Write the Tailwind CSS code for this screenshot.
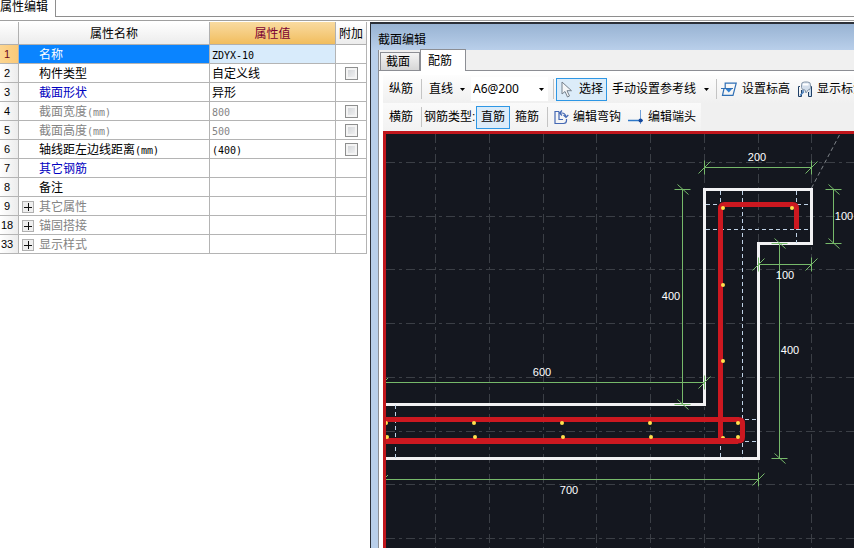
<!DOCTYPE html>
<html lang="zh-CN">
<head>
<meta charset="utf-8">
<title>属性编辑</title>
<script src="https://cdn.jsdelivr.net/npm/@tailwindcss/browser@4"></script>
</head>
<body class="flex h-screen flex-col overflow-hidden bg-white font-['Liberation_Sans','Noto_Sans_CJK_SC',sans-serif] text-xs leading-4 text-black">
  <header class="flex h-[21px] shrink-0 border-b border-[#a0a0a0]">
    <h1 class="w-[55px] shrink-0 -mt-px whitespace-nowrap leading-4">属性编辑</h1>
    <div class="h-[17px] flex-1 border-b border-l border-[#8e8e8e]"></div>
  </header>

  <div class="flex min-h-0 flex-1 pt-px">
    <section class="w-[370px] shrink-0" aria-label="属性">
      <table class="w-[367px] table-fixed border-separate border-spacing-0">
        <colgroup><col class="w-[19px]"><col class="w-[191px]"><col class="w-[126px]"><col class="w-[31px]"></colgroup>
        <thead>
          <tr class="h-[23px] [&>th]:border-r [&>th]:border-b [&>th]:border-[#b0b0b0] [&>th]:p-0 [&>th]:pt-0.5 [&>th]:font-normal">
            <th class="bg-linear-to-b from-white to-[#ececec]"></th>
            <th class="bg-linear-to-b from-white to-[#ececec]">属性名称</th>
            <th class="bg-linear-to-b from-[#f9dba0] to-[#f1bd5c] text-[#7a0032]">属性值</th>
            <th class="bg-linear-to-b from-white to-[#ececec] whitespace-nowrap">附加</th>
          </tr>
        </thead>
        <tbody class="[&>tr]:h-[19px] [&_td]:border-r [&_td]:border-b [&_td]:border-[#b4b4b4] [&_td]:p-0 [&_td>div]:h-4 [&_td]:pt-px [&_th]:border-r [&_th]:border-b [&_th]:border-[#b4b4b4] [&_th]:bg-linear-to-r [&_th]:p-0 [&_th]:pr-1 [&_th]:text-[11px] [&_th]:font-normal [&_input]:mx-auto [&_input]:block [&_input]:size-[13px] [&_input]:appearance-none [&_input]:border [&_input]:border-[#8e8f8f] [&_input]:bg-linear-to-br [&_input]:from-[#cdd0d4] [&_input]:to-[#f6f6f6] [&_input]:shadow-[inset_0_0_0_2px_#f4f4f4] [&_code]:font-['DejaVu_Sans_Mono',monospace] [&_code]:text-[10px] [&_code]:leading-none [&_button]:mr-[5px] [&_button]:ml-[3px] [&_button]:size-3 [&_button]:border [&_button]:border-[#b0b0b0] [&_button]:bg-[#efefef] [&_button>svg]:block">
          <tr><th class="from-[#fcd590] to-[#fbca78] text-[#6b0a20]">1</th><td class="bg-[#0a84ff] text-white"><div class="pl-5">名称</div></td><td class="bg-[#d8ebfb]"><div class="pl-0.5"><code>ZDYX-10</code></div></td><td></td></tr>
          <tr><th class="from-white to-[#ececec]">2</th><td><div class="pl-5">构件类型</div></td><td><div class="pl-0.5">自定义线</div></td><td><input type="checkbox" aria-label="附加 构件类型"></td></tr>
          <tr><th class="from-white to-[#ececec]">3</th><td class="text-[#0000c0]"><div class="pl-5">截面形状</div></td><td><div class="pl-0.5">异形</div></td><td></td></tr>
          <tr><th class="from-white to-[#ececec]">4</th><td class="text-[#848484]"><div class="pl-5">截面宽度<code>(mm)</code></div></td><td class="text-[#848484]"><div class="pl-0.5"><code>800</code></div></td><td><input type="checkbox" aria-label="附加 截面宽度"></td></tr>
          <tr><th class="from-white to-[#ececec]">5</th><td class="text-[#848484]"><div class="pl-5">截面高度<code>(mm)</code></div></td><td class="text-[#848484]"><div class="pl-0.5"><code>500</code></div></td><td><input type="checkbox" aria-label="附加 截面高度"></td></tr>
          <tr><th class="from-white to-[#ececec]">6</th><td><div class="pl-5">轴线距左边线距离<code>(mm)</code></div></td><td><div class="pl-0.5"><code>(400)</code></div></td><td><input type="checkbox" aria-label="附加 轴线距左边线距离"></td></tr>
          <tr><th class="from-white to-[#ececec]">7</th><td class="text-[#0000c0]"><div class="pl-5">其它钢筋</div></td><td></td><td></td></tr>
          <tr><th class="from-white to-[#ececec]">8</th><td><div class="pl-5">备注</div></td><td></td><td></td></tr>
          <tr><th class="from-white to-[#ececec]">9</th><td class="text-[#848484]"><div class="flex items-center"><button type="button" aria-label="展开 其它属性"><svg width="10" height="10" stroke="#111"><path d="M1 5.500h8M5.500 1v8"/></svg></button>其它属性</div></td><td></td><td></td></tr>
          <tr><th class="from-white to-[#ececec]">18</th><td class="text-[#848484]"><div class="flex items-center"><button type="button" aria-label="展开 锚固搭接"><svg width="10" height="10" stroke="#111"><path d="M1 5.500h8M5.500 1v8"/></svg></button>锚固搭接</div></td><td></td><td></td></tr>
          <tr><th class="from-white to-[#ececec]">33</th><td class="text-[#848484]"><div class="flex items-center"><button type="button" aria-label="展开 显示样式"><svg width="10" height="10" stroke="#111"><path d="M1 5.500h8M5.500 1v8"/></svg></button>显示样式</div></td><td></td><td></td></tr>
        </tbody>
      </table>
    </section>

    <main class="flex min-w-0 flex-1 flex-col border-t-2 border-l border-[#2c3038] bg-[#b9cfea] pl-[7px]">
      <h2 class="-ml-[7px] h-[26px] shrink-0 bg-linear-to-b from-[#98b3d3] to-[#b9cfea] pt-2 pl-[7px]">截面编辑</h2>
      <div class="flex h-[21px] shrink-0 items-end border-b border-l border-[#8c8e94] bg-[#f0f0f0] pl-px" role="tablist">
        <button type="button" role="tab" aria-selected="false" class="h-[18px] w-10 border border-b-0 border-[#8c8e94] bg-linear-to-b from-[#f4f4f4] to-[#d6d6d6] pr-1">截面</button>
        <button type="button" role="tab" aria-selected="true" class="-mb-px h-[22px] w-[46px] border border-b-0 border-[#8c8e94] bg-white pr-1.5">配筋</button>
      </div>

      <div class="flex min-h-0 flex-1 flex-col border-l border-[#8c8e94] bg-white pt-1 pl-1">
        <div class="flex min-h-0 flex-1 flex-col bg-[#f0f0f0]">
          <div class="flex h-7 shrink-0 items-center overflow-hidden bg-linear-to-b from-[#fdfdfd] to-[#f0f0f0] whitespace-nowrap [&_button]:shrink-0 [&_svg]:shrink-0" role="toolbar">
            <button type="button" class="ml-1.5">纵筋</button>
            <span class="ml-2 h-5 w-px shrink-0 bg-[#c4c4c4]"></span>
            <button type="button" class="ml-[7px] flex w-[42px] items-center gap-[7px]">直线<svg width="5" height="3"><path d="M0 0h5L2.500 3z"/></svg></button>
            <div class="relative h-6 w-[77px] shrink-0">
              <select aria-label="钢筋规格" class="h-6 w-full appearance-none bg-white pl-0.5 font-['Noto_Sans',sans-serif] text-xs"><option>A6@200</option></select>
              <svg class="pointer-events-none absolute top-[11px] right-1" width="5" height="3"><path d="M0 0h5L2.500 3z"/></svg>
            </div>
            <span class="ml-[5px] h-5 w-px shrink-0 bg-[#c4c4c4]"></span>
            <button type="button" aria-pressed="true" class="ml-0.5 flex h-[23px] w-[51px] items-center gap-1.5 border border-[#2e97e5] bg-[#dcecf9] pl-1">
              <svg width="12" height="17" viewBox="0 0 12 17"><path d="M1 1v12l3-2.500 2.500 5.500 2-1-2.500-5.300h4.500z" fill="#f4f6f8" stroke="#75808c"/></svg>选择
            </button>
            <button type="button" class="ml-[5px] flex items-center gap-2">手动设置参考线<svg width="5" height="3"><path d="M0 0h5L2.500 3z"/></svg></button>
            <span class="ml-[7px] h-5 w-px shrink-0 bg-[#c4c4c4]"></span>
            <button type="button" class="ml-1 flex items-center gap-[5px]">
              <svg width="16" height="15" viewBox="0 0 16 15" fill="none" stroke="#2f6fb5" stroke-width="1.200"><path d="M4.200 6.500V1.200h11L12 13.300H1.500L3 6.500M0 6.500h12" /><path d="M4.500 7h6.500l-3.200 3.500z" fill="#2f7fd0" stroke="none"/></svg>设置标高
            </button>
            <button type="button" class="ml-[7px] flex items-center gap-1">
              <svg width="16" height="17" viewBox="0 0 16 17" fill="none"><path d="M3 5.500H1.500v10h3V9M12 5.500h2.500v10h-3V11" stroke="#1f3f66"/><path d="M13 6v9" stroke="#9cc2e6"/><path d="M3 14.500l4-4M6 9v3" stroke="#4d82bd" stroke-width="1.500"/><path d="M4.500 3.500q0-2.500 3-2.500h3q3 0 3 2.500v3q0 2.500-2.500 2.500l-2 3-1-3q-3.500 0-3.500-2.500z" fill="#d3deeb" stroke="#8696a8"/><path d="M6 3.500h5.500" stroke="#fff" stroke-width="2"/></svg>显示标注
            </button>
          </div>
          <div class="flex h-7 w-[318px] shrink-0 items-center bg-linear-to-b from-[#fafafa] to-[#f2f2f2] whitespace-nowrap [&_button]:shrink-0 [&_svg]:shrink-0" role="toolbar">
            <button type="button" class="ml-1.5">横筋</button>
            <span class="ml-2 h-5 w-px bg-[#c4c4c4]"></span>
            <span class="ml-0.5 w-[52px]">钢筋类型:</span>
            <button type="button" aria-pressed="true" class="h-[23px] w-[34px] border border-[#2e97e5] bg-[#dcecf9]">直筋</button>
            <button type="button" class="ml-[5px]">箍筋</button>
            <span class="ml-2 h-5 w-px bg-[#c4c4c4]"></span>
            <button type="button" class="ml-1.5 flex items-center gap-1">
              <svg width="15" height="15" viewBox="0 0 15 15" fill="none" stroke="#4468b4" stroke-width="1.200"><path d="M5 1.500H1v12h8.500q3 0 3-3V9M5 1.500v8h4" /><path d="M5.500 3h2.500q3 0 4 3.500M8 .5L5.500 3 8 5.500M9.500 5l2.500 2.500L14.300 5"/></svg>编辑弯钩
            </button>
            <button type="button" class="ml-[7px] flex items-center gap-1">
              <svg width="16" height="15" viewBox="0 0 16 15" fill="none"><path d="M12.500 0v14" stroke="#6f9fd8"/><path d="M0 10.500h15" stroke="#2d78c8" stroke-width="1.500"/><circle cx="12.500" cy="10.500" r="2" fill="#17479a"/></svg>编辑端头
            </button>
          </div>

          <div class="min-h-0 flex-1 border-t-3 border-l-3 border-[#c0161c] bg-[#14171f]">
            <svg class="block h-full w-full" role="img" aria-label="截面配筋图">
              <defs>
                <g id="end-x" fill="none"><path d="M0-7V7M-6 6L6-6"/></g>
                <g id="end-y" fill="none"><path d="M-8 0H8M-5-5L6 5"/></g>
              </defs>
              <g transform="translate(-386 -134)">
                <g stroke="#3b3f46" stroke-dasharray="9 4 3 4" fill="none">
                  <path d="M435.500 134V1600M489.500 134V1600M543.500 134V1600M596.500 134V1600M650.500 134V1600M704.500 134V1600M758.500 134V1600M811.500 134V1600M865.500 134V1600"/>
                  <path d="M386 162.500H2400M386 216.500H2400M386 269.500H2400M386 323.500H2400M386 377.500H2400M386 431.500H2400M386 484.500H2400M386 538.500H2400"/>
                </g>
                <path d="M811.500 188L840.500 133" stroke="#80858a" stroke-dasharray="4 3"/>
                <path d="M386 404.500H704.500V189.500H811.500V243.500H758.500V458.500H386" fill="none" stroke="#f2f2f4" stroke-width="3"/>
                <path d="M720.500 191V204M720.500 446V458M742.500 191V458M796.500 191V243M706 204.500H811M706 229.500H811M745 419.500H758M745 441.500H758M395.500 405V458" fill="none" stroke="#bfd2e6" stroke-dasharray="4 3"/>
                <g fill="none" stroke="#cc1820" stroke-width="5">
                  <path d="M720.500 441V208.500Q720.500 204.500 724.500 204.500H792.500Q796.500 204.500 796.500 208.500V229"/>
                  <path d="M386 419.500H738.500Q742.500 419.500 742.500 423.500V437Q742.500 441 738.500 441H386"/>
                  <path d="M386 441H738" stroke-width="6"/>
                </g>
                <g fill="#ffe14d">
                  <circle cx="723" cy="208" r="2"/><circle cx="792" cy="208" r="2"/><circle cx="723" cy="285" r="2"/><circle cx="723" cy="361" r="2"/>
                  <circle cx="738" cy="423" r="2"/><circle cx="738" cy="437" r="2"/><path d="M721 438a2 2 0 0 1 4 0z"/>
                  <circle cx="650" cy="423" r="2"/><circle cx="651" cy="437" r="2"/><circle cx="562" cy="423" r="2"/><circle cx="563" cy="437" r="2"/>
                  <circle cx="474" cy="423" r="2"/><circle cx="475" cy="437" r="2"/><circle cx="386" cy="423" r="2"/><circle cx="387" cy="437" r="2"/>
                </g>
                <g stroke="#76b96a">
                  <path d="M704 167.500H811M758 264.500H811M386 382.500H704M386 479.500H758M682.500 189V404M833.500 189V243M779.500 243V458" fill="none"/>
                  <use href="#end-x" x="704.500" y="167.500"/><use href="#end-x" x="811.500" y="167.500"/>
                  <use href="#end-x" x="758.500" y="264.500"/><use href="#end-x" x="811.500" y="264.500"/>
                  <use href="#end-x" x="704.500" y="382.500"/><use href="#end-x" x="758.500" y="479.500"/>
                  <path d="M385 381l3-3M385 478l3-3"/>
                  <use href="#end-y" x="682.500" y="189.500"/><use href="#end-y" x="682.500" y="404.500"/>
                  <use href="#end-y" x="833.500" y="189.500"/><use href="#end-y" x="833.500" y="243.500"/>
                  <use href="#end-y" x="779.500" y="243.500"/><use href="#end-y" x="779.500" y="458.500"/>
                </g>
                <g fill="#fff" font-size="11" text-anchor="middle">
                  <text x="757" y="161">200</text><text x="671" y="300">400</text><text x="844" y="220">100</text><text x="785" y="279">100</text>
                  <text x="790" y="354">400</text><text x="542" y="376">600</text><text x="569" y="494">700</text>
                </g>
              </g>
            </svg>
          </div>
        </div>
      </div>
    </main>
  </div>
</body>
</html>
